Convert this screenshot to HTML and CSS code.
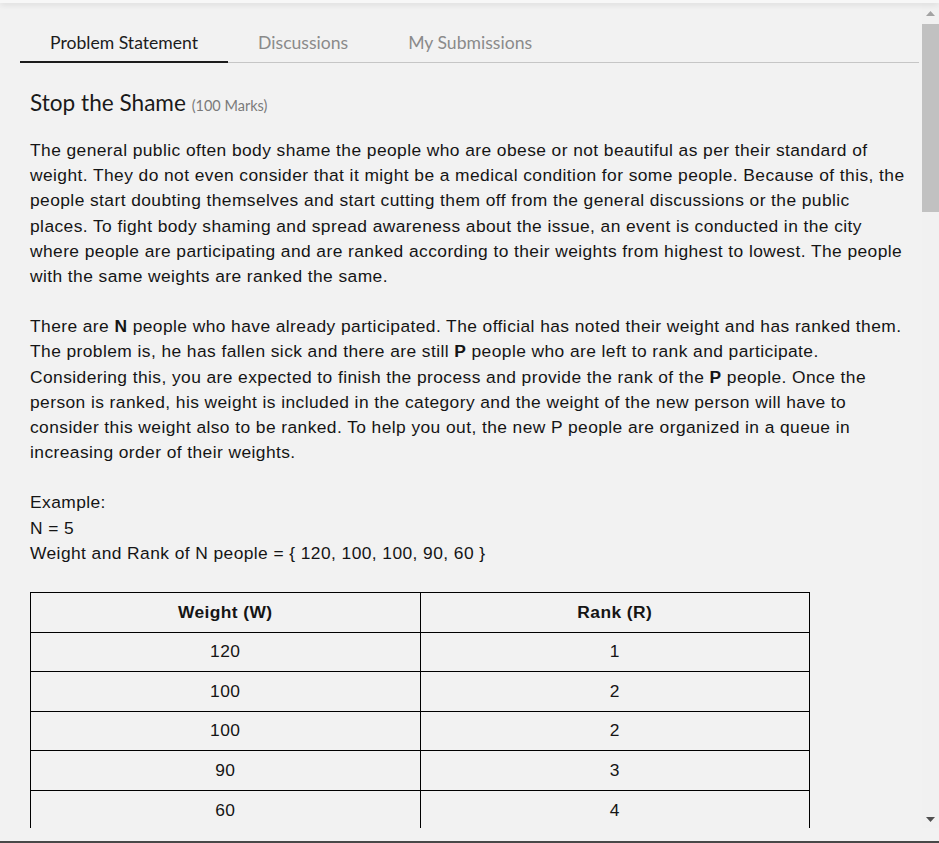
FILE: index.html
```html
<!DOCTYPE html>
<html>
<head>
<meta charset="utf-8">
<link rel="stylesheet" href="styles.css">
</head>
<body>
<div class="topbar"></div>
<div class="frame">
  <div class="viewport">
    <div class="tabs">
      <div class="tab active">Problem Statement</div>
      <div class="tab">Discussions</div>
      <div class="tab">My Submissions</div>
    </div>
    <div class="content">
      <h1 class="title">Stop the Shame <span class="marks">(100 Marks)</span></h1>
      <p>The general public often body shame the people who are obese or not beautiful as per their standard of<br>weight. They do not even consider that it might be a medical condition for some people. Because of this, the<br>people start doubting themselves and start cutting them off from the general discussions or the public<br>places. To fight body shaming and spread awareness about the issue, an event is conducted in the city<br>where people are participating and are ranked according to their weights from highest to lowest. The people<br>with the same weights are ranked the same.</p>
      <p>There are <b>N</b> people who have already participated. The official has noted their weight and has ranked them.<br>The problem is, he has fallen sick and there are still <b>P</b> people who are left to rank and participate.<br>Considering this, you are expected to finish the process and provide the rank of the <b>P</b> people. Once the<br>person is ranked, his weight is included in the category and the weight of the new person will have to<br>consider this weight also to be ranked. To help you out, the new P people are organized in a queue in<br>increasing order of their weights.</p>
      <p>Example:<br>N = 5<br>Weight and Rank of N people = { 120, 100, 100, 90, 60 }</p>
      <table class="grid">
        <thead>
          <tr><th>Weight (W)</th><th>Rank (R)</th></tr>
        </thead>
        <tbody>
          <tr><td>120</td><td>1</td></tr>
          <tr><td>100</td><td>2</td></tr>
          <tr><td>100</td><td>2</td></tr>
          <tr><td>90</td><td>3</td></tr>
          <tr><td>60</td><td>4</td></tr>
        </tbody>
      </table>
    </div>
  </div>
  <div class="scrollbar">
    <div class="sb-btn">
      <svg width="9" height="5" viewBox="0 0 9 5"><polygon points="0,5 9,5 4.5,0" fill="#a3a3a3"/></svg>
    </div>
    <div class="sb-thumb"></div>
    <div class="sb-track"></div>
    <div class="sb-btn">
      <svg width="9" height="5" viewBox="0 0 9 5"><polygon points="0,0 9,0 4.5,5" fill="#505050"/></svg>
    </div>
  </div>
</div>
<div class="bottom"></div>
</body>
</html>
```
FILE: styles.css
```css
html, body {
  margin: 0;
  padding: 0;
}
body {
  width: 939px;
  height: 843px;
  background: #f2f2f2;
  overflow: hidden;
  display: flex;
  flex-direction: column;
  font-family: "Liberation Sans", Arial, sans-serif;
  color: #151515;
}
.topbar {
  height: 3px;
  background: #f7f7f7;
  box-shadow: 0 1px 6px rgba(0, 0, 0, 0.16);
  position: relative;
  z-index: 2;
}
.frame {
  height: 825px;
  display: flex;
}
.viewport {
  flex: 1;
  overflow: hidden;
  padding: 0 3px 0 20px;
}
.tabs {
  display: flex;
  border-bottom: 1px solid #c6c6c6;
  font-family: Lato, "Liberation Sans", sans-serif;
  font-size: 17.6px;
  line-height: 20px;
}
.tab {
  padding: 30px 30px 8px;
  border-bottom: 2px solid transparent;
  margin-bottom: -1px;
  color: #8a8a8a;
}
.tab.active {
  color: #1c1c1c;
  border-bottom-color: #1c1c1c;
}
.content {
  padding: 0 10px;
}
.title {
  font-family: Lato, "Liberation Sans", sans-serif;
  font-weight: normal;
  font-size: 22.6px;
  line-height: 28px;
  margin: 26px 0 18px;
  color: #1a1a1a;
}
.marks {
  font-size: 14.5px;
  color: #7a7a7a;
}
p {
  font-size: 17.4px;
  letter-spacing: 0.42px;
  line-height: 25.2px;
  margin: 0 0 25px;
  white-space: nowrap;
}
.grid {
  border-collapse: collapse;
  width: 780px;
  margin-top: 26px;
  font-size: 17.4px;
  letter-spacing: 0.42px;
  line-height: 25.2px;
}
.grid th, .grid td {
  border: 1px solid #000;
  width: 50%;
  text-align: center;
  padding: 6.7px 8px;
}
.grid th {
  font-weight: bold;
}
.scrollbar {
  width: 17px;
  display: flex;
  flex-direction: column;
  background: #f1f1f1;
}
.sb-btn {
  height: 17px;
  display: flex;
  align-items: center;
  justify-content: center;
  flex: none;
}
.sb-btn:first-child {
  padding-top: 2px;
}
.sb-thumb {
  height: 188px;
  margin-top: 2px;
  background: #c1c1c1;
  flex: none;
}
.sb-track {
  flex: 1;
}
.bottom {
  flex: 1;
  border-bottom: 2px solid #484848;
}
```
